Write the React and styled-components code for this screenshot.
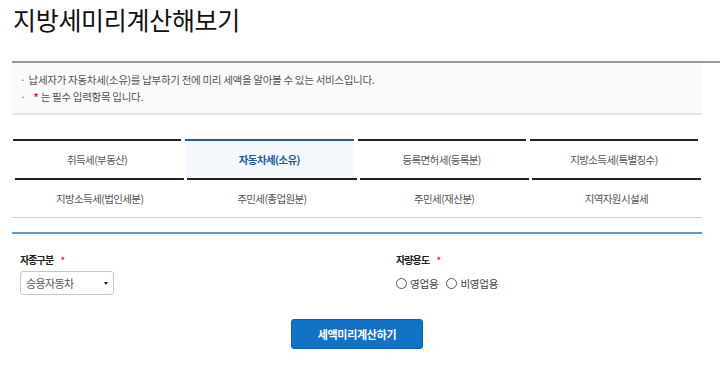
import React, { useState } from "react";
import styled, { createGlobalStyle } from "styled-components";

const GlobalStyle = createGlobalStyle`
  body {
    margin: 0;
    background: #fff;
    font-family: "Noto Sans CJK KR", "Noto Sans", sans-serif;
    color: #333;
  }
  * { box-sizing: border-box; }
`;

const topTabs = ["취득세(부동산)", "자동차세(소유)", "등록면허세(등록분)", "지방소득세(특별징수)"];
const bottomTabs = ["지방소득세(법인세분)", "주민세(종업원분)", "주민세(재산분)", "지역자원시설세"];

function App() {
  const [active, setActive] = useState("자동차세(소유)");
  const [use, setUse] = useState("");

  return (
    <Page>
      <GlobalStyle />
      <Title>지방세미리계산해보기</Title>
      <Notice>
        <li>납세자가 자동차세(소유)를 납부하기 전에 미리 세액을 알아볼 수 있는 서비스입니다.</li>
        <li>
          <Star>*</Star> 는 필수 입력항목 입니다.
        </li>
      </Notice>

      <Tabs>
        <TabRow $first>
          {topTabs.map((t) => (
            <Tab key={t} $active={active === t} onClick={() => setActive(t)}>
              {t}
            </Tab>
          ))}
        </TabRow>
        <TabRow>
          {bottomTabs.map((t) => (
            <Tab key={t} $active={active === t} onClick={() => setActive(t)}>
              {t}
            </Tab>
          ))}
        </TabRow>
      </Tabs>

      <Form>
        <Field>
          <Label>
            자종구분 <Star>*</Star>
          </Label>
          <SelectBox>
            <span>승용자동차</span>
            <Caret />
          </SelectBox>
        </Field>
        <Field>
          <Label>
            자량용도 <Star>*</Star>
          </Label>
          <Radios>
            {["영업용", "비영업용"].map((r) => (
              <RadioItem key={r} onClick={() => setUse(r)}>
                <Circle $on={use === r} />
                {r}
              </RadioItem>
            ))}
          </Radios>
        </Field>
      </Form>

      <Actions>
        <Button>세액미리계산하기</Button>
      </Actions>
    </Page>
  );
}

export default App;

const Page = styled.div`
  width: 720px;
  padding: 0 18px 0 12px;
`;

const Title = styled.h1`
  margin: 0;
  padding: 2px 0 0 1px;
  height: 63px;
  font-size: 25px;
  line-height: 34px;
  font-weight: 400;
  color: #111;
  letter-spacing: -0.3px;
  border-bottom: 2px solid #9a9a9a;
  margin-right: -18px;
`;

const Notice = styled.ul`
  margin: 0;
  padding: 8px 8px 8px;
  list-style: none;
  background: #fafafa;
  border-bottom: 2px solid #e4e4e4;
  font-size: 10.5px;
  line-height: 17px;
  color: #555;
  letter-spacing: -0.3px;

  li::before {
    content: "·";
    margin-right: 3px;
    color: #777;
  }
  li + li::before {
    margin-right: 8px;
  }
`;

const Star = styled.span`
  color: #e0202a;
  font-weight: 700;
`;

const Tabs = styled.div`
  margin-top: 24px;
  border-bottom: 1px solid #cfcfcf;
`;

const TabRow = styled.div`
  display: grid;
  grid-template-columns: repeat(4, 1fr);
  column-gap: ${(p) => (p.$first ? "4px" : "3px")};
  padding: ${(p) => (p.$first ? "0 4px 0 1px" : "0 1px 0 3px")};
`;

const Tab = styled.div`
  height: 39px;
  display: flex;
  align-items: center;
  justify-content: center;
  border-top: 2px solid ${(p) => (p.$active ? "#1d5ba6" : "#222")};
  background: ${(p) => (p.$active ? "#f5f9fe" : "transparent")};
  color: ${(p) => (p.$active ? "#1d5ba6" : "#555")};
  font-weight: ${(p) => (p.$active ? 700 : 400)};
  font-size: 10.5px;
  letter-spacing: -0.6px;
  cursor: pointer;
`;

const Form = styled.div`
  margin-top: 14px;
  border-top: 2px solid #5b9bd5;
  display: grid;
  grid-template-columns: 376px 1fr;
  padding: 19px 8px 0;
`;

const Field = styled.div`
  display: flex;
  flex-direction: column;
  gap: 3px;
`;

const Label = styled.div`
  font-size: 10px;
  font-weight: 700;
  line-height: 14px;
  letter-spacing: -0.9px;
  color: #222;

  ${Star} {
    margin-left: 6px;
    font-size: 9px;
  }
`;

const SelectBox = styled.div`
  width: 94px;
  height: 24px;
  border: 1px solid #c8c8c8;
  border-radius: 3px;
  display: flex;
  align-items: center;
  justify-content: space-between;
  padding: 0 5px 0 5px;
  font-size: 11px;
  color: #5a5a5a;
  letter-spacing: -0.6px;
  background: #fff;
`;

const Caret = styled.span`
  width: 0;
  height: 0;
  border-left: 2.5px solid transparent;
  border-right: 2.5px solid transparent;
  border-top: 3px solid #222;
`;

const Radios = styled.div`
  display: flex;
  align-items: center;
  gap: 8px;
  height: 24px;
`;

const RadioItem = styled.label`
  display: flex;
  align-items: center;
  gap: 3px;
  font-size: 10.5px;
  color: #444;
  letter-spacing: -0.2px;
  cursor: pointer;
`;

const Circle = styled.span`
  width: 11px;
  height: 11px;
  border-radius: 50%;
  border: 1px solid #555;
  background: ${(p) => (p.$on ? "radial-gradient(#333 35%, #fff 40%)" : "#fff")};
`;

const Actions = styled.div`
  display: flex;
  justify-content: center;
  margin-top: 24px;
`;

const Button = styled.button`
  width: 132px;
  height: 30px;
  border: 1px solid #0f62b0;
  border-radius: 3px;
  background: #1172c8;
  color: #fff;
  font-family: inherit;
  font-size: 11px;
  font-weight: 700;
  letter-spacing: -0.3px;
  cursor: pointer;
`;
